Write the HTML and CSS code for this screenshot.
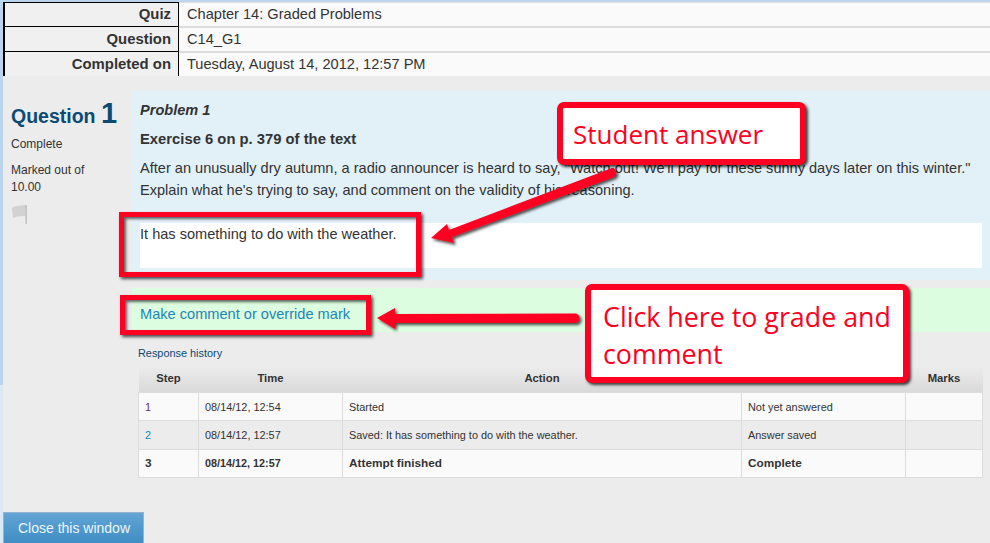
FILE: index.html
```html
<!DOCTYPE html>
<html lang="en">
<head>
<meta charset="utf-8">
<title>Quiz review</title>
<link rel="stylesheet" href="styles.css">
</head>
<body>
<div class="page">
  <table class="summary">
    <tr><th>Quiz</th><td>Chapter 14: Graded Problems</td></tr>
    <tr><th>Question</th><td>C14_G1</td></tr>
    <tr><th>Completed on</th><td>Tuesday, August 14, 2012, 12:57 PM</td></tr>
  </table>
  <div class="que">
    <div class="info">
      <h3 class="qno">Question <span class="num">1</span></h3>
      <div class="state">Complete</div>
      <div class="grade">Marked out of 10.00</div>
      <svg class="flag" width="17" height="21" viewBox="0 0 17 21"><path d="M1 5 C5 2 9 3 14 2 L15 13 C10 13 6 13 2 15 Z" fill="#d2d2d2"/><path d="M14 2h2v19h-1.500z" fill="#c4c4c4"/></svg>
    </div>
    <div class="main">
      <div class="formulation">
        <p class="title">Problem 1</p>
        <p class="sub">Exercise 6 on p. 379 of the text</p>
        <p class="text">After an unusually dry autumn, a radio announcer is heard to say, "Watch out! We'll pay for these sunny days later on this winter." Explain what he's trying to say, and comment on the validity of his reasoning.</p>
        <div class="answer">It has something to do with the weather.</div>
      </div>
      <div class="comment"><a href="#">Make comment or override mark</a></div>
      <div class="history">
        <h4>Response history</h4>
        <table class="steps">
          <thead><tr><th class="c1">Step</th><th class="c2">Time</th><th class="c3">Action</th><th class="c4">State</th><th class="c5">Marks</th></tr></thead>
          <tbody>
            <tr><td class="visited">1</td><td>08/14/12, 12:54</td><td>Started</td><td>Not yet answered</td><td></td></tr>
            <tr class="alt"><td><a href="#">2</a></td><td>08/14/12, 12:57</td><td>Saved: It has something to do with the weather.</td><td>Answer saved</td><td></td></tr>
            <tr class="last"><td>3</td><td class="date">08/14/12, 12:57</td><td>Attempt finished</td><td>Complete</td><td></td></tr>
          </tbody>
        </table>
      </div>
    </div>
  </div>
  <button class="close" type="button">Close this window</button>
</div>

<svg class="arrows" width="990" height="543" viewBox="0 0 990 543">
  <defs>
    <filter id="sh" x="-10%" y="-30%" width="120%" height="170%"><feDropShadow dx="2" dy="2" stdDeviation="1.500" flood-color="#000" flood-opacity=".7"/></filter>
  </defs>
  <g filter="url(#sh)" fill="#ff0022" stroke="none">
    <path d="M431 238 L447 224 L449 230 L612 168 C616 167 618 175 614 177 L452 237 L454 243 Z"/>
    <path d="M377 318 L395 308 L395 314 L575 313.500 C581 313.500 581 323 575 323 L395 323 L395 329 Z"/>
  </g>
</svg>
<div class="box box-answer"></div>
<div class="box box-link"></div>
<div class="callout callout-answer">Student answer</div>
<div class="callout callout-grade">Click here to grade and comment</div>
</body>
</html>
```
FILE: styles.css
```css
html, body { margin: 0; padding: 0; }
body {
  height: 543px;
  overflow: hidden;
  position: relative;
  font-family: "Liberation Sans", Arial, sans-serif;
  color: #333;
  background: linear-gradient(to bottom, #bad5ed 0, #bad5ed 385px, #dbe8f5 385px);
}
.page {
  margin: 2px 0 0 3px;
  height: 541px;
  background: #ececec;
  position: relative;
}
.summary {
  width: 987px;
  border-collapse: separate;
  border-spacing: 0;
  table-layout: fixed;
  font-size: 14.6px;
}
.summary tr { height: 25px; }
.summary tr:first-child { height: 24px; }
.summary th {
  width: 166px;
  padding: 0 7px 1px 0;
  text-align: right;
  font-size: 14.9px;
  background: #f0f0f0;
  border-style: solid;
  border-color: #000;
  border-width: 1px 1px 0 2px;
}
.summary td {
  padding: 0 0 1px 8px;
  background: #fafafa;
  border-top: 2px solid #dcdcdc;
}
.summary tr:first-child td { border-top: 1px solid #e0e0e0; }
.que { display: flex; margin-top: 15px; }
.info { width: 103px; padding: 0 18px 0 8px; flex: none; }
.qno {
  margin: 9px 0 0;
  font-size: 19.500px;
  line-height: 26px;
  color: #0a4a73;
  white-space: nowrap;
}
.num { font-size: 29px; font-weight: 700; }
.state { font-size: 12px; line-height: 16px; margin-top: 7px; }
.grade { font-size: 12px; line-height: 17px; margin-top: 10px; }
.flag { display: block; margin-top: 7px; }
.main { flex: 1; min-width: 0; }
.formulation {
  background: #e2f0f8;
  height: 189px;
  padding: 0 8px 0 8px;
  font-size: 14.57px;
  box-sizing: border-box;
  overflow: hidden;
}
.formulation p { margin: 0; }
.title { font-weight: 700; font-style: italic; line-height: 20px; padding-top: 9px; }
.sub { font-weight: 700; line-height: 20px; margin-top: 9px !important; font-size: 14.8px; }
.text { line-height: 22px; margin-top: 8px !important; }
.answer {
  background: #fff;
  height: 45px;
  line-height: 22px;
  margin-top: 22px;
}
.comment {
  margin-top: 8px;
  background: #ddfde0;
  height: 44px;
  box-sizing: border-box;
  padding: 15px 8px 0;
  font-size: 14.6px;
  line-height: 22px;
}
.comment a, .steps a { color: #1a86b5; text-decoration: none; }
.history { margin: 15px 0 0 6px; width: 845px; }
.history h4 {
  margin: 0 0 5px;
  font-size: 10.900px;
  line-height: 13px;
  font-weight: 400;
  color: #0a4a73;
}
.steps {
  width: 845px;
  table-layout: fixed;
  border-collapse: collapse;
  font-size: 10.900px;
}
.steps th {
  height: 26px;
  padding: 0 0 1px;
  font-size: 11.300px;
  background: linear-gradient(to bottom, #ededed, #d9d9d9);
  text-align: center;
}
.c1 { width: 60px; }
.c2 { width: 144px; }
.c3 { width: 399px; }
.c4 { width: 164px; }
.steps td {
  border: 1px solid #dcdcdc;
  border-width: 1px;
  padding: 0 6px;
  height: 27px;
  background: #fafafa;
}
.steps .visited { color: #6b2c6b; }
.steps .alt td { background: #ececec; height: 28px; }
.steps .last td { font-weight: 700; font-size: 11.800px; padding-bottom: 1px; height: 26px; }
.steps .last .date { font-size: 10.800px; }
.close {
  position: absolute;
  left: 0;
  top: 510px;
  width: 141px;
  height: 31px;
  padding: 0 0 0 1px;
  border: 1px solid #93b4cf;
  border-bottom: 0;
  background: linear-gradient(to bottom, #62a5d5, #3f8dc3);
  color: #eef5fa;
  font: 14px "Liberation Sans", Arial, sans-serif;
}
.arrows { position: absolute; left: 0; top: 0; }
.box {
  position: absolute;
  box-sizing: border-box;
  border: 5px solid #ff0022;
  box-shadow: 2px 2px 3px rgba(0,0,0,.7), inset 2px 2px 3px rgba(0,0,0,.6);
}
.box-answer { left: 119px; top: 212px; width: 302px; height: 65px; }
.box-link { left: 120px; top: 295px; width: 251px; height: 40px; }
.callout {
  position: absolute;
  box-sizing: border-box;
  background: #fff;
  border: 6px solid #ff0022;
  border-radius: 7px;
  box-shadow: 2px 2px 3px rgba(0,0,0,.75);
  color: #ff0022;
  font-family: "Open Sans", "Noto Sans", sans-serif;
}
.callout-answer {
  left: 557px; top: 102px; width: 249px; height: 63px;
  padding: 11px 10px;
  font-size: 26px;
  line-height: 30px;
}
.callout-grade {
  left: 585px; top: 284px; width: 324px; height: 99px;
  padding: 8px 4px 8px 12px;
  font-size: 26.800px;
  line-height: 37px;
}
```
